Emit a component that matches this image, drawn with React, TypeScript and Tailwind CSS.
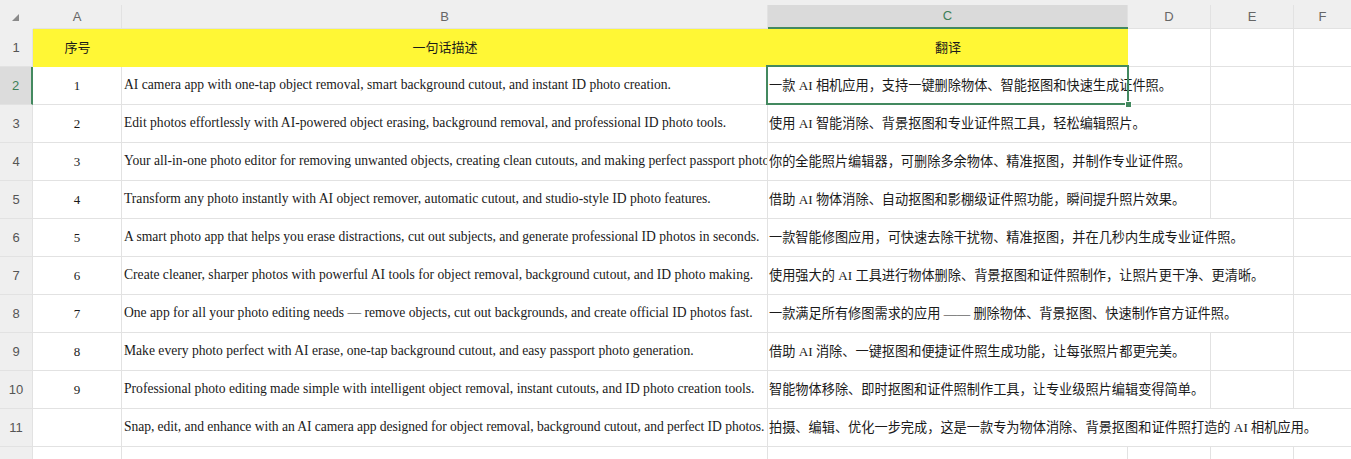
import React from 'react';

const GRID = 'border-[#e2e2e2]';
const GREEN = '#43895f';

type Row = { n: string; desc: string; zh: string; span: number; tight?: boolean };

const rows: Row[] = [
  {
    n: '1',
    desc: 'AI camera app with one-tap object removal, smart background cutout, and instant ID photo creation.',
    zh: '一款 AI 相机应用，支持一键删除物体、智能抠图和快速生成证件照。',
    span: 1,
  },
  {
    n: '2',
    desc: 'Edit photos effortlessly with AI-powered object erasing, background removal, and professional ID photo tools.',
    zh: '使用 AI 智能消除、背景抠图和专业证件照工具，轻松编辑照片。',
    span: 1,
  },
  {
    n: '3',
    desc: 'Your all-in-one photo editor for removing unwanted objects, creating clean cutouts, and making perfect passport photos.',
    zh: '你的全能照片编辑器，可删除多余物体、精准抠图，并制作专业证件照。',
    span: 1,
  },
  {
    n: '4',
    desc: 'Transform any photo instantly with AI object remover, automatic cutout, and studio-style ID photo features.',
    zh: '借助 AI 物体消除、自动抠图和影棚级证件照功能，瞬间提升照片效果。',
    span: 1,
  },
  {
    n: '5',
    desc: 'A smart photo app that helps you erase distractions, cut out subjects, and generate professional ID photos in seconds.',
    zh: '一款智能修图应用，可快速去除干扰物、精准抠图，并在几秒内生成专业证件照。',
    span: 2,
  },
  {
    n: '6',
    desc: 'Create cleaner, sharper photos with powerful AI tools for object removal, background cutout, and ID photo making.',
    zh: '使用强大的 AI 工具进行物体删除、背景抠图和证件照制作，让照片更干净、更清晰。',
    span: 2,
  },
  {
    n: '7',
    desc: 'One app for all your photo editing needs — remove objects, cut out backgrounds, and create official ID photos fast.',
    zh: '一款满足所有修图需求的应用 —— 删除物体、背景抠图、快速制作官方证件照。',
    span: 2,
  },
  {
    n: '8',
    desc: 'Make every photo perfect with AI erase, one-tap background cutout, and easy passport photo generation.',
    zh: '借助 AI 消除、一键抠图和便捷证件照生成功能，让每张照片都更完美。',
    span: 1,
  },
  {
    n: '9',
    desc: 'Professional photo editing made simple with intelligent object removal, instant cutouts, and ID photo creation tools.',
    zh: '智能物体移除、即时抠图和证件照制作工具，让专业级照片编辑变得简单。',
    span: 1,
  },
  {
    n: '',
    desc: 'Snap, edit, and enhance with an AI camera app designed for object removal, background cutout, and perfect ID photos.',
    zh: '拍摄、编辑、优化一步完成，这是一款专为物体消除、背景抠图和证件照打造的 AI 相机应用。',
    span: 3,
    tight: true,
  },
];

const serif = "font-['Liberation_Serif','Noto_Sans_CJK_SC',serif]";
const cjk = "font-['Liberation_Serif','Noto_Sans_CJK_SC',serif]";
const sans = "font-['Liberation_Sans',Arial,sans-serif]";

function ColHeader({ label, w, active, last }: { label: string; w: string; active?: boolean; last?: boolean }) {
  return (
    <div
      className={`flex h-[29px] shrink-0 flex-col ${w} ${
        active ? 'border-b-2 border-[#43895f]' : `border-b ${GRID}`
      }`}
    >
      <div
        className={`mt-[5px] flex flex-1 items-center justify-center text-[13px] ${sans} ${
          last ? '' : `border-r ${GRID}`
        } ${active ? 'bg-[#dadada] text-[#3d7f57]' : 'text-[#666]'}`}
      >
        {label}
      </div>
    </div>
  );
}

function RowHeader({ n, active }: { n?: number; active?: boolean }) {
  return (
    <div
      className={`flex h-full w-[33px] shrink-0 items-center justify-center border-b ${GRID} text-[13px] ${sans} ${
        active
          ? 'border-r-2 border-r-[#43895f] bg-[#dcdcdc] text-[#3d7f57]'
          : `border-r bg-[#efefef] text-[#555]`
      }`}
    >
      {n}
    </div>
  );
}

export default function App() {
  return (
    <div className="relative h-[459px] w-[1351px] overflow-hidden bg-white text-[#1a1a1a]">
      {/* column headers */}
      <div className="flex bg-[#efefef]">
        <div className="flex h-[29px] w-[33px] shrink-0 items-start justify-start pl-[12px] pt-[14px]">
          <svg width="7" height="7" viewBox="0 0 7 7">
            <polygon points="7,0 7,7 0,7" fill="#8a8a8a" />
          </svg>
        </div>
        <ColHeader label="A" w="w-[89px]" />
        <ColHeader label="B" w="w-[646px]" />
        <ColHeader label="C" w="w-[360px]" active />
        <ColHeader label="D" w="w-[83px]" />
        <ColHeader label="E" w="w-[83px]" />
        <div className="flex-1">
          <ColHeader label="F" w="w-full" last />
        </div>
      </div>

      {/* row 1 */}
      <div className="flex h-[38px]">
        <RowHeader n={1} />
        <div className={`flex w-[89px] shrink-0 items-center justify-center bg-[#fff735] text-[13px] ${cjk}`}>序号</div>
        <div className={`flex w-[646px] shrink-0 items-center justify-center bg-[#fff735] text-[13px] ${cjk}`}>一句话描述</div>
        <div className={`flex w-[360px] shrink-0 items-center justify-center bg-[#fff735] text-[13px] ${cjk}`}>翻译</div>
        <div className={`w-[83px] shrink-0 border-r border-b ${GRID}`} />
        <div className={`w-[83px] shrink-0 border-r border-b ${GRID}`} />
        <div className={`flex-1 border-b ${GRID}`} />
      </div>

      {rows.map((r, i) => (
        <div key={i} className="flex h-[38px]">
          <RowHeader n={i + 2} active={i === 0} />
          <div
            className={`flex w-[89px] shrink-0 items-center justify-center border-r border-b ${GRID} text-[13px] ${serif}`}
          >
            {r.n}
          </div>
          <div
            className={`flex w-[646px] shrink-0 items-center overflow-hidden whitespace-nowrap border-r border-b ${GRID} pl-[2px] text-[13.6px] ${serif} ${
              r.tight ? 'tracking-[-0.06px]' : ''
            }`}
          >
            {r.desc}
          </div>
          <div
            className={`relative z-10 flex w-[360px] shrink-0 items-center whitespace-nowrap border-b ${GRID} pl-[1px] text-[13.2px] ${cjk}`}
          >
            {r.zh}
          </div>
          <div className={`w-[83px] shrink-0 border-b ${GRID} ${r.span >= 2 ? '' : 'border-r'}`} />
          <div className={`w-[83px] shrink-0 border-b ${GRID} ${r.span >= 3 ? '' : 'border-r'}`} />
          <div className={`flex-1 border-b ${GRID}`} />
        </div>
      ))}

      {/* row 12, partly visible */}
      <div className="flex h-[38px]">
        <RowHeader />
        <div className={`w-[89px] shrink-0 border-r ${GRID}`} />
        <div className={`w-[646px] shrink-0 border-r ${GRID}`} />
        <div className={`w-[360px] shrink-0 border-r ${GRID}`} />
        <div className={`w-[83px] shrink-0 border-r ${GRID}`} />
        <div className={`w-[83px] shrink-0 border-r ${GRID}`} />
        <div className="flex-1" />
      </div>

      {/* selection on C2 */}
      <div className="pointer-events-none absolute left-[766px] top-[65px] z-20 h-[40px] w-[363px] border-2 border-[#43895f]" />
      <div
        className="absolute left-[1125px] top-[101px] z-30 h-[7px] w-[7px] border border-white"
        style={{ backgroundColor: GREEN }}
      />
    </div>
  );
}
